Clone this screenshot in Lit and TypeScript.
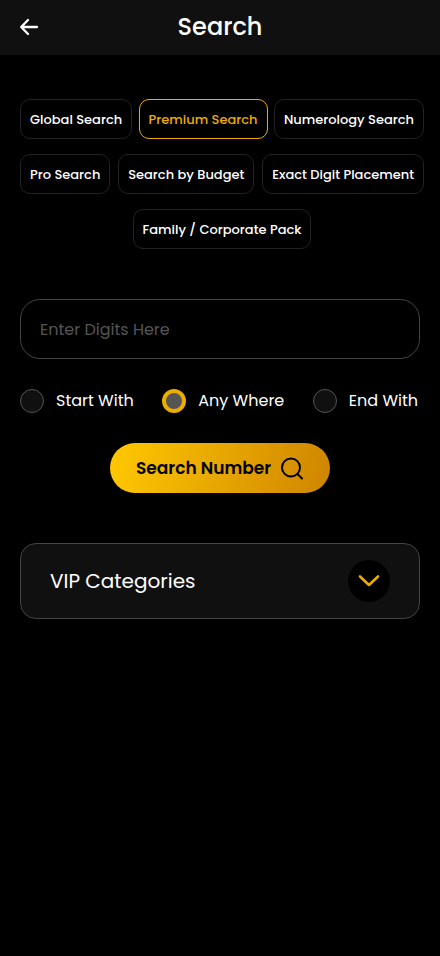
import { LitElement, html, css } from "lit";
import { customElement, state } from "lit/decorators.js";
import { classMap } from "lit/directives/class-map.js";

const MODE_ROWS = [
  ["Global Search", "Premium Search", "Numerology Search"],
  ["Pro Search", "Search by Budget", "Exact Digit Placement"],
  ["Family / Corporate Pack"],
];

const POSITIONS = ["Start With", "Any Where", "End With"];

@customElement("app-root")
export class AppRoot extends LitElement {
  @state() private mode = "Premium Search";
  @state() private position = "Any Where";

  static styles = css`
    :host {
      display: block;
      min-height: 100vh;
      background: #000;
      color: #fff;
      font-family: Poppins, Inter, "Open Sans", sans-serif;
      font-size: 16px;
      line-height: 24px;
    }
    * {
      box-sizing: border-box;
    }
    button,
    input {
      font: inherit;
      color: inherit;
      margin: 0;
    }
    button {
      cursor: pointer;
    }
    svg {
      display: block;
      fill: none;
      stroke: currentColor;
      stroke-linecap: round;
      stroke-linejoin: round;
    }
    header {
      display: grid;
      grid-template-columns: 24px 1fr 24px;
      align-items: center;
      height: 55px;
      padding: 0 16px 2px;
      background: #101010;
    }
    .back {
      padding: 0;
      border: 0;
      background: none;
    }
    h1 {
      margin: 0;
      font-size: 24px;
      line-height: 36px;
      font-weight: 500;
      text-align: center;
    }
    main {
      padding: 44px 20px;
    }
    .modes {
      display: flex;
      flex-direction: column;
      gap: 15px;
      margin-right: -4px;
    }
    .row {
      display: flex;
      justify-content: space-between;
      gap: 6px;
    }
    .row.single {
      justify-content: center;
    }
    .chip {
      height: 40px;
      padding: 1px 9px 0;
      border: 1px solid #222;
      border-radius: 10px;
      background: #000;
      font-size: 13px;
      line-height: 20px;
      font-weight: 500;
      white-space: nowrap;
    }
    .chip.active {
      border-color: #ecac00;
      color: #ecac00;
    }
    .digits {
      display: block;
      width: 100%;
      height: 60px;
      margin-top: 50px;
      padding: 0 19px;
      border: 1px solid #444;
      border-radius: 20px;
      background: #000;
      outline: none;
    }
    .digits::placeholder {
      color: #555;
      opacity: 1;
    }
    fieldset {
      display: flex;
      justify-content: space-between;
      min-width: 0;
      margin: 30px 0 0;
      padding: 0 2px 0 0;
      border: 0;
    }
    .option {
      display: flex;
      align-items: center;
      gap: 12px;
      white-space: nowrap;
      cursor: pointer;
    }
    .option input {
      appearance: none;
      width: 24px;
      height: 24px;
      border: 1px solid #555;
      border-radius: 50%;
      background: #101010;
    }
    .option input:checked {
      border: 4px solid #ecac00;
      background: #555;
    }
    .submit {
      display: flex;
      align-items: center;
      justify-content: center;
      gap: 9px;
      height: 50px;
      margin: 30px auto 0;
      padding: 0 26px;
      border: 0;
      border-radius: 25px;
      background: linear-gradient(100deg, #ffc800, #cf8500);
      color: #000;
      font-size: 17px;
      font-weight: 600;
    }
    .categories {
      display: flex;
      align-items: center;
      justify-content: space-between;
      width: 100%;
      margin-top: 50px;
      padding: 16px 29px;
      border: 1px solid #444;
      border-radius: 16px;
      background: #101010;
      font-size: 20px;
      line-height: 30px;
    }
    .toggle {
      display: grid;
      place-items: center;
      width: 42px;
      height: 42px;
      border-radius: 50%;
      background: #000;
      color: #ecac00;
    }
  `;

  render() {
    return html`
      <header>
        <button class="back" aria-label="Back">
          <svg width="24" height="24" viewBox="0 0 24 24" stroke-width="2.3">
            <path d="M21 12H5.5M12 5L5.2 12L12 19" />
          </svg>
        </button>
        <h1>Search</h1>
      </header>
      <main>
        <nav class="modes" aria-label="Search type">
          ${MODE_ROWS.map(
            (row) => html`<div class=${classMap({ row: true, single: row.length === 1 })}>
              ${row.map(
                (name) => html`<button
                  class=${classMap({ chip: true, active: name === this.mode })}
                  aria-pressed=${name === this.mode}
                  @click=${() => (this.mode = name)}
                >${name}</button>`
              )}
            </div>`
          )}
        </nav>
        <form @submit=${(e: Event) => e.preventDefault()}>
          <input class="digits" type="text" inputmode="numeric" placeholder="Enter Digits Here" aria-label="Enter Digits Here" />
          <fieldset aria-label="Digit position">
            ${POSITIONS.map(
              (name) => html`<label class="option">
                <input
                  type="radio"
                  name="position"
                  .value=${name}
                  .checked=${name === this.position}
                  @change=${() => (this.position = name)}
                />
                <span>${name}</span>
              </label>`
            )}
          </fieldset>
          <button class="submit" type="submit">
            Search Number
            <svg width="24" height="24" viewBox="0 0 24 24" stroke-width="2" aria-hidden="true">
              <circle cx="11" cy="11.5" r="9" />
              <path d="M17.5 18L22 22.5" />
            </svg>
          </button>
        </form>
        <button class="categories" aria-expanded="false">
          VIP Categories
          <span class="toggle">
            <svg width="24" height="24" viewBox="0 0 24 24" stroke-width="2.6" aria-hidden="true">
              <path d="M3 7.5L12 16L21 7.5" />
            </svg>
          </span>
        </button>
      </main>
    `;
  }
}
